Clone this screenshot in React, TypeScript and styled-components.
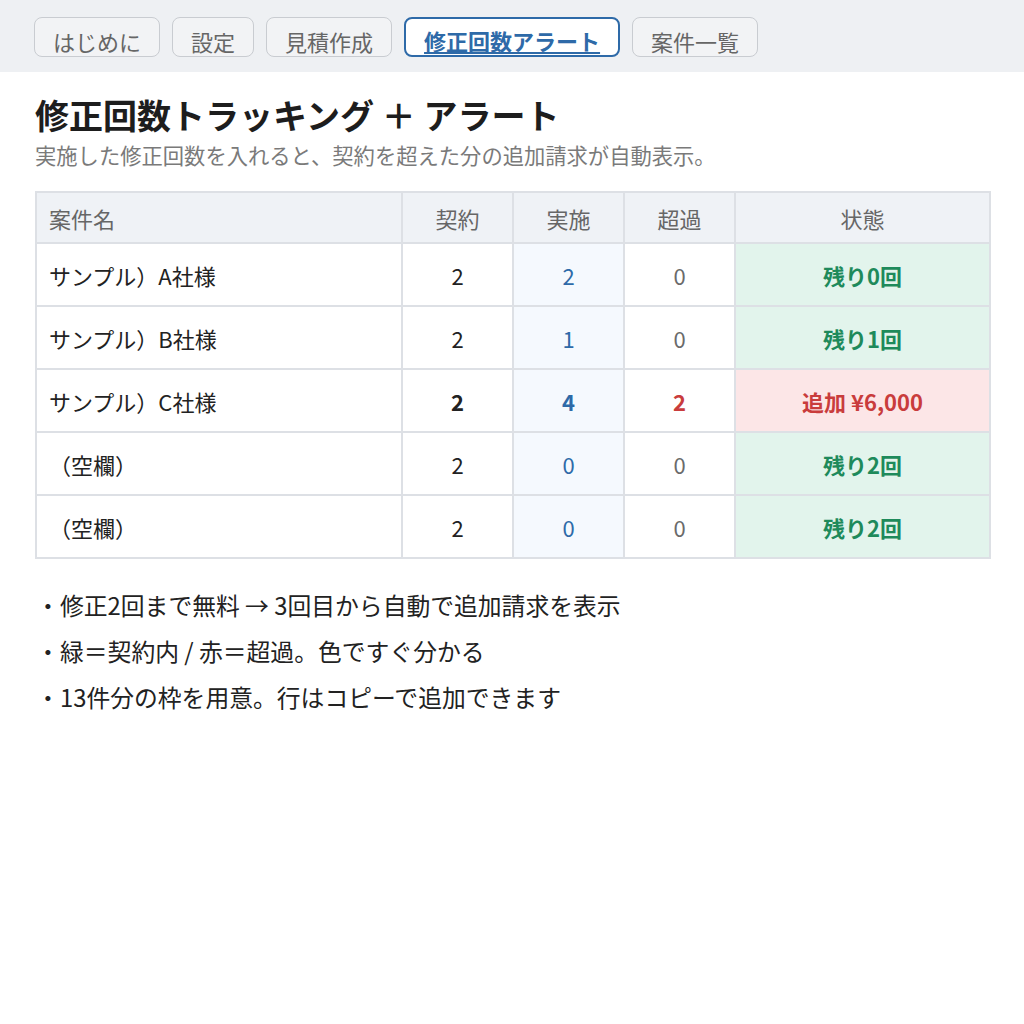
import React from "react";
import styled, { createGlobalStyle } from "styled-components";

const Global = createGlobalStyle`
  html, body { margin: 0; padding: 0; background: #ffffff; }
  body { font-family: "Noto Sans CJK JP", "Noto Sans", sans-serif; color: #222; }
`;

const TabBar = styled.nav`
  display: flex;
  align-items: flex-start;
  gap: 12px;
  height: 72px;
  box-sizing: border-box;
  padding: 17px 34px 0;
  background: #eef0f3;
`;

const Tab = styled.div<{ $active?: boolean }>`
  box-sizing: border-box;
  height: 40px;
  padding: 0 18px 3px;
  display: flex;
  align-items: flex-end;
  font-size: 22px;
  line-height: 24px;
  border-radius: 8px;
  border: ${(p) => (p.$active ? "2px solid #2e6aa8" : "1.5px solid #c9ccd1")};
  background: ${(p) => (p.$active ? "#ffffff" : "#f2f3f5")};
  color: ${(p) => (p.$active ? "#2e6aa8" : "#666")};
  font-weight: ${(p) => (p.$active ? 700 : 400)};
  text-decoration: ${(p) => (p.$active ? "underline" : "none")};
  text-underline-offset: 2px;
  text-decoration-thickness: 2px;
`;

const Main = styled.main`
  padding: 20px 34px 0 35px;
`;

const Title = styled.h1`
  margin: 0;
  font-size: 34px;
  line-height: 46px;
  font-weight: 700;
  color: #1d1d1d;
`;

const Subtitle = styled.p`
  margin: 3px 0 0;
  font-size: 21.3px;
  line-height: 28px;
  color: #7a7a7a;
`;

const Table = styled.table`
  margin-top: 22px;
  width: 954px;
  border-collapse: collapse;
  table-layout: fixed;
  font-size: 22px;
`;

const Col = styled.col<{ $w: number }>`
  width: ${(p) => p.$w}px;
`;

const Th = styled.th<{ $left?: boolean }>`
  height: 49px;
  padding: 0 ${(p) => (p.$left ? "12px" : "0")};
  background: #eff2f6;
  border: 2px solid #dde0e5;
  color: #666;
  font-weight: 400;
  text-align: ${(p) => (p.$left ? "left" : "center")};
`;

type Tone = "plain" | "done" | "over" | "ok" | "bad";

const Td = styled.td<{ $tone: Tone; $bold?: boolean; $left?: boolean; $zero?: boolean }>`
  height: 61px;
  padding: 0 ${(p) => (p.$left ? "12px" : "0")};
  border: 2px solid #dde0e5;
  text-align: ${(p) => (p.$left ? "left" : "center")};
  font-weight: ${(p) => (p.$bold || p.$tone === "ok" || p.$tone === "bad" ? 700 : 400)};
  background: ${(p) =>
    p.$tone === "done" ? "#f5f9fe" : p.$tone === "ok" ? "#e2f4ec" : p.$tone === "bad" ? "#fce6e7" : "#ffffff"};
  color: ${(p) =>
    p.$tone === "done"
      ? "#2e6aa8"
      : p.$tone === "ok"
      ? "#1e8a5b"
      : p.$tone === "bad"
      ? "#c93c3c"
      : p.$tone === "over" && !p.$zero
      ? "#c93c3c"
      : p.$tone === "over"
      ? "#6a6a6a"
      : "#222"};
`;

const Notes = styled.ul`
  list-style: none;
  margin: 28px 0 0;
  padding: 0;
  display: flex;
  flex-direction: column;
  gap: 10px;
`;

const Note = styled.li`
  font-size: 23.8px;
  line-height: 36px;
  color: #222;
  &::before {
    content: "・";
    display: inline-block;
    width: 24px;
    margin-left: 1px;
  }
`;

const rows = [
  { name: "サンプル）A社様", contract: 2, done: 2 },
  { name: "サンプル）B社様", contract: 2, done: 1 },
  { name: "サンプル）C社様", contract: 2, done: 4 },
  { name: "（空欄）", contract: 2, done: 0 },
  { name: "（空欄）", contract: 2, done: 0 },
];

const tabs = ["はじめに", "設定", "見積作成", "修正回数アラート", "案件一覧"];

export default function App() {
  return (
    <>
      <Global />
      <TabBar>
        {tabs.map((t) => (
          <Tab key={t} $active={t === "修正回数アラート"}>
            {t}
          </Tab>
        ))}
      </TabBar>
      <Main>
        <Title>修正回数トラッキング ＋ アラート</Title>
        <Subtitle>実施した修正回数を入れると、契約を超えた分の追加請求が自動表示。</Subtitle>
        <Table>
          <colgroup>
            <Col $w={366} />
            <Col $w={111} />
            <Col $w={111} />
            <Col $w={111} />
            <Col $w={255} />
          </colgroup>
          <thead>
            <tr>
              <Th $left>案件名</Th>
              <Th>契約</Th>
              <Th>実施</Th>
              <Th>超過</Th>
              <Th>状態</Th>
            </tr>
          </thead>
          <tbody>
            {rows.map((r, i) => {
              const over = Math.max(0, r.done - r.contract);
              const isOver = over > 0;
              const status = isOver
                ? `追加 ¥${(over * 3000).toLocaleString("en-US")}`
                : `残り${r.contract - r.done}回`;
              return (
                <tr key={i}>
                  <Td $tone="plain" $left>
                    {r.name}
                  </Td>
                  <Td $tone="plain" $bold={isOver}>
                    {r.contract}
                  </Td>
                  <Td $tone="done" $bold={isOver}>
                    {r.done}
                  </Td>
                  <Td $tone="over" $bold={isOver} $zero={!isOver}>
                    {over}
                  </Td>
                  <Td $tone={isOver ? "bad" : "ok"}>{status}</Td>
                </tr>
              );
            })}
          </tbody>
        </Table>
        <Notes>
          <Note>修正2回まで無料 → 3回目から自動で追加請求を表示</Note>
          <Note>緑＝契約内 / 赤＝超過。色ですぐ分かる</Note>
          <Note>13件分の枠を用意。行はコピーで追加できます</Note>
        </Notes>
      </Main>
    </>
  );
}
